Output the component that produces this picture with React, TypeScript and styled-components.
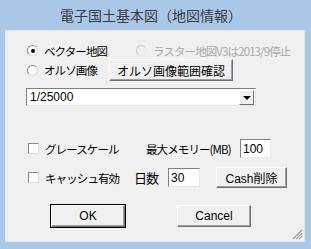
import React from 'react';
import styled, { createGlobalStyle } from 'styled-components';

const GlobalStyle = createGlobalStyle`
  html, body {
    margin: 0;
    padding: 0;
    background: #a9c8e8;
  }
`;

const Window = styled.div`
  width: 311px;
  height: 249px;
  background: #a9c8e8;
  display: flex;
  flex-direction: column;
  font-family: 'Liberation Sans', 'Noto Sans CJK JP', sans-serif;
  font-size: 12px;
  color: #000;
  box-sizing: border-box;
  padding: 0 6px 7px 5px;
`;

const TitleBar = styled.div`
  height: 30px;
  display: flex;
  align-items: center;
  justify-content: center;
  padding-right: 8px;
  font-family: 'Noto Sans CJK JP', sans-serif;
  font-size: 14px;
  font-weight: 400;
  color: #3a3a3a;
`;

const Panel = styled.div`
  position: relative;
  flex: 1;
  background: #f0f0f0;
  border: 1px solid #e4e4e4;
  padding: 11px 0 0 21px;
  display: flex;
  flex-direction: column;
`;

const Row = styled.div<{ $h: number; $mt?: number }>`
  display: flex;
  align-items: center;
  height: ${(p) => p.$h}px;
  margin-top: ${(p) => p.$mt ?? 0}px;
`;

const Cell = styled.div<{ $w?: number }>`
  display: flex;
  align-items: center;
  width: ${(p) => (p.$w ? `${p.$w}px` : 'auto')};
  flex-shrink: 0;
`;

const RadioDot = styled.span<{ $checked?: boolean; $disabled?: boolean }>`
  width: 11px;
  height: 11px;
  border-radius: 50%;
  box-sizing: border-box;
  border: 1px solid ${(p) => (p.$disabled ? '#c8c8c8' : '#8a8a8a')};
  border-right-color: ${(p) => (p.$disabled ? '#e8e8e8' : '#d8d8d8')};
  border-bottom-color: ${(p) => (p.$disabled ? '#e8e8e8' : '#d8d8d8')};
  background: ${(p) => (p.$disabled ? '#f0f0f0' : '#fff')};
  margin-right: 6px;
  display: flex;
  align-items: center;
  justify-content: center;
  &::after {
    content: '';
    display: ${(p) => (p.$checked ? 'block' : 'none')};
    width: 4px;
    height: 4px;
    border-radius: 50%;
    background: #000;
  }
`;

const CheckBox = styled.span`
  width: 11px;
  height: 11px;
  box-sizing: border-box;
  border: 1px solid #8a8a8a;
  border-right-color: #dcdcdc;
  border-bottom-color: #dcdcdc;
  background: #fff;
  margin: 0 6px 0 1px;
`;

const Label = styled.span<{ $disabled?: boolean; $size?: number }>`
  font-family: 'Noto Sans CJK JP', sans-serif;
  font-size: ${(p) => p.$size ?? 11.5}px;
  line-height: 14px;
  white-space: nowrap;
  color: ${(p) => (p.$disabled ? '#a8a8a8' : '#000')};
  letter-spacing: -0.9px;
`;

const Button = styled.button<{ $w: number; $h: number; $default?: boolean }>`
  width: ${(p) => p.$w}px;
  height: ${(p) => p.$h}px;
  box-sizing: border-box;
  background: #f0f0f0;
  font-family: 'Liberation Sans', 'Noto Sans CJK JP', sans-serif;
  font-size: 12px;
  color: #000;
  padding: 0;
  border: 1px solid;
  border-color: #fff #707070 #707070 #fff;
  box-shadow: ${(p) =>
    p.$default ? '0 0 0 1px #000, inset -1px -1px 0 #a0a0a0' : 'inset -1px -1px 0 #a0a0a0'};
  flex-shrink: 0;
  cursor: default;
`;

const TextBox = styled.input<{ $w: number }>`
  width: ${(p) => p.$w}px;
  height: 19px;
  box-sizing: border-box;
  border: 1px solid;
  border-color: #808080 #e8e8e8 #e8e8e8 #808080;
  background: #fff;
  font-family: 'Liberation Sans', sans-serif;
  font-size: 12px;
  padding: 0 2px;
  outline: none;
`;

const Combo = styled.div`
  width: 230px;
  height: 18px;
  margin-left: -1px;
  box-sizing: border-box;
  border: 1px solid;
  border-color: #808080 #e8e8e8 #e8e8e8 #808080;
  background: #fff;
  display: flex;
  align-items: center;
  justify-content: space-between;
  padding-left: 3px;
  font-family: 'Liberation Sans', sans-serif;
  font-size: 12px;
`;

const ComboArrow = styled.div`
  width: 15px;
  height: 15px;
  margin-right: 1px;
  box-sizing: border-box;
  background: #f0f0f0;
  border: 1px solid;
  border-color: #fff #707070 #707070 #fff;
  display: flex;
  align-items: center;
  justify-content: center;
  &::after {
    content: '';
    border-left: 4px solid transparent;
    border-right: 4px solid transparent;
    border-top: 4px solid #000;
    margin-top: 1px;
  }
`;

const ButtonRow = styled.div`
  display: flex;
  gap: 52px;
  margin-top: 17px;
  padding-left: 24px;
`;

const Grip = styled.svg`
  position: absolute;
  right: 1px;
  bottom: 1px;
`;

export default function App() {
  return (
    <>
      <GlobalStyle />
      <Window>
        <TitleBar>電子国土基本図（地図情報）</TitleBar>
        <Panel>
          <Row $h={17}>
            <Cell $w={109}>
              <RadioDot $checked />
              <Label>ベクター地図</Label>
            </Cell>
            <Cell>
              <RadioDot $disabled />
              <Label $disabled>ラスター地図V3は2013/9停止</Label>
            </Cell>
          </Row>
          <Row $h={22} $mt={0}>
            <Cell $w={82}>
              <RadioDot />
              <Label>オルソ画像</Label>
            </Cell>
            <Button $w={124} $h={22}>
              オルソ画像範囲確認
            </Button>
          </Row>
          <Row $h={18} $mt={7}>
            <Combo>
              1/25000
              <ComboArrow />
            </Combo>
          </Row>
          <Row $h={19} $mt={33}>
            <Cell $w={119}>
              <CheckBox />
              <Label>グレースケール</Label>
            </Cell>
            <Cell $w={94}>
              <Label>最大メモリー(MB)</Label>
            </Cell>
            <TextBox $w={31} defaultValue="100" />
          </Row>
          <Row $h={21} $mt={9}>
            <Cell $w={107}>
              <CheckBox />
              <Label>キャッシュ有効</Label>
            </Cell>
            <Cell $w={34}>
              <Label $size={13}>日数</Label>
            </Cell>
            <TextBox $w={32} defaultValue="30" />
            <Cell $w={16} />
            <Button $w={71} $h={21}>
              Cash削除
            </Button>
          </Row>
          <ButtonRow>
            <Button $w={74} $h={22} $default>
              OK
            </Button>
            <Button $w={74} $h={22}>
              Cancel
            </Button>
          </ButtonRow>
          <Grip width="13" height="13" viewBox="0 0 13 13">
            <path d="M12 3 L3 12 M12 6 L6 12 M12 9 L9 12" stroke="#9a9a9a" strokeWidth="1.2" />
            <path d="M13 4 L4 13 M13 7 L7 13 M13 10 L10 13" stroke="#ffffff" strokeWidth="0.8" />
          </Grip>
        </Panel>
      </Window>
    </>
  );
}
